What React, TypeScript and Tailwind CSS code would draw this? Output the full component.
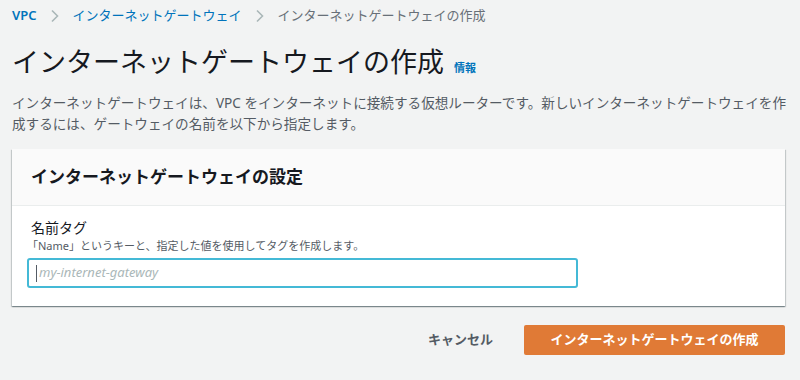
const FONT = '"Noto Sans", "Noto Sans CJK JP", sans-serif'

function Chevron() {
  return (
    <svg width="10" height="14" viewBox="0 0 10 14" className="mx-[13px]">
      <path d="M2 1.5 L7.5 7 L2 12.5" fill="none" stroke="#aab7b8" strokeWidth="1.6" />
    </svg>
  )
}

export default function App() {
  return (
    <div className="w-[800px] h-[380px] bg-[#f2f3f3] overflow-hidden px-[12px]" style={{ fontFamily: FONT }}>
      {/* breadcrumb */}
      <div className="flex items-center h-[32px] text-[13px] text-[#687078]">
        <span className="text-[#0073bb] font-semibold">VPC</span>
        <Chevron />
        <span className="text-[#0073bb]">インターネットゲートウェイ</span>
        <Chevron />
        <span>インターネットゲートウェイの作成</span>
      </div>

      {/* title */}
      <div className="flex items-end mt-[11px] h-[38px]">
        <h1 className="text-[27px] leading-[38px] text-[#16191f]">インターネットゲートウェイの作成</h1>
        <span className="ml-[10px] mb-[5px] text-[11px] font-bold text-[#0073bb]">情報</span>
      </div>

      <p className="mt-[11px] text-[13.6px] leading-[21px] text-[#545b64] w-[776px]">
        インターネットゲートウェイは、VPC をインターネットに接続する仮想ルーターです。新しいインターネットゲートウェイを作<br />成するには、ゲートウェイの名前を以下から指定します。
      </p>

      {/* card */}
      <div className="mt-[15px] w-[773px] bg-white shadow-[0_1px_1px_0_rgba(0,28,36,0.3),1px_1px_1px_0_rgba(0,28,36,0.15),-1px_1px_1px_0_rgba(0,28,36,0.15)]">
        <div className="h-[57px] bg-[#fafafa] border-b border-[#eaeded] flex items-center px-[19px]">
          <h2 className="text-[17px] font-bold text-[#16191f]">インターネットゲートウェイの設定</h2>
        </div>
        <div className="px-[19px] pt-[12px] pb-[18px]">
          <div className="text-[14px] leading-[20px] text-[#16191f]">名前タグ</div>
          <div className="text-[11px] leading-[16px] text-[#545b64] -ml-[4px]">「Name」というキーと、指定した値を使用してタグを作成します。</div>
          <div className="mt-[4px] -ml-[4px] w-[551px] h-[30px] border-2 border-[#44b9d6] rounded-[3px] flex items-center pl-[7px]">
            <span className="w-px h-[17px] bg-[#545b64]" />
            <span className="ml-[2px] text-[13px] italic text-[#aab7b8]">my-internet-gateway</span>
          </div>
        </div>
      </div>

      {/* actions */}
      <div className="flex justify-end items-center mt-[19px] w-[773px]">
        <button className="text-[13px] font-bold text-[#545b64] mr-[31px]">キャンセル</button>
        <button className="w-[261px] h-[30px] rounded-[2px] bg-[#e07a36] text-white text-[13px] font-bold">
          インターネットゲートウェイの作成
        </button>
      </div>
    </div>
  )
}
